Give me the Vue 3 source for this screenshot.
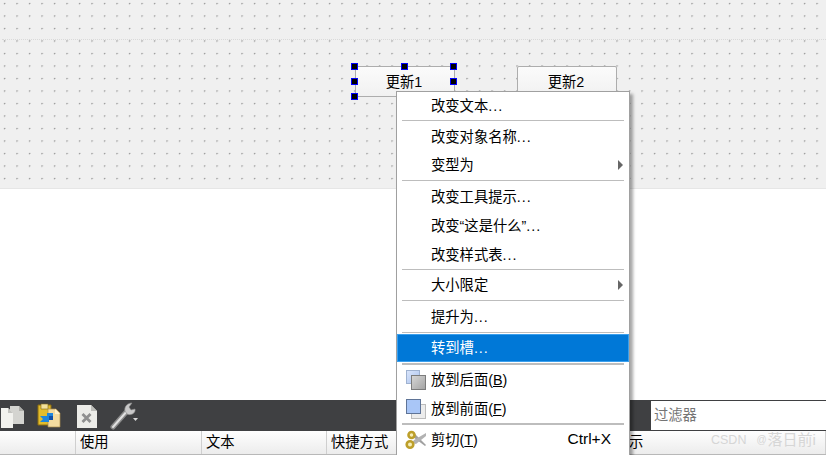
<script setup>
const columns = [
  { label: '', width: 76 },
  { label: '使用', width: 126 },
  { label: '文本', width: 125 },
  { label: '快捷方式', width: 125 },
  { label: '', width: 128 },
  { label: '示', width: 246, inset: 49 },
]
const handles = [
  { x: 0, y: 0 }, { x: 50, y: 0 }, { x: 99, y: 0 },
  { x: 0, y: 15 }, { x: 99, y: 15 }, { x: 0, y: 30 },
]
const menu = [
  { label: '改变文本', dots: true, h: 26 },
  { sep: 1, h: 3 },
  { label: '改变对象名称', dots: true, h: 29 },
  { label: '变型为', h: 28, arrow: true },
  { sep: 1, h: 3 },
  { label: '改变工具提示', dots: true, h: 29 },
  { label: '改变“这是什么”', dots: true, h: 30 },
  { label: '改变样式表', dots: true, h: 27 },
  { sep: 1, h: 3 },
  { label: '大小限定', h: 28, arrow: true },
  { sep: 1, h: 3 },
  { label: '提升为', dots: true, h: 29 },
  { sep: 1, h: 3 },
  { label: '转到槽', dots: true, h: 28, active: true },
  { sep: 2, h: 3 },
  { label: '放到后面', key: 'B', h: 30, icon: 'back' },
  { label: '放到前面', key: 'F', h: 27, icon: 'front' },
  { sep: 2, h: 3 },
  { label: '剪切', key: 'T', h: 30, icon: 'cut', shortcut: 'Ctrl+X' },
]
</script>

<template>
  <div class="app">
    <section class="canvas">
      <div class="guide"></div>
      <button class="widget w1"><span>更新1</span></button>
      <button class="widget w2"><span>更新2</span></button>
      <i
        v-for="(p, i) in handles"
        :key="i"
        class="handle"
        :style="{ left: 355 + p.x + 'px', top: 66 + p.y + 'px' }"
      ></i>
    </section>

    <div class="blank"></div>

    <section class="toolbar">
      <div class="tools">
        <svg class="ic pages" width="26" height="26" viewBox="0 0 26 26">
          <path d="M9 3h9l5 5v13H9z" fill="#d4d4d0" />
          <path d="M-3 5h10l5 5v15H-3z" fill="#f2f2ee" />
          <path d="M7 5l5 5H7z" fill="#c4c4c0" />
          <path d="M18 3l5 5h-5z" fill="#aeaeaa" />
        </svg>
        <svg class="ic save" width="24" height="26" viewBox="0 0 24 26">
          <path d="M1 2h13v20H1z" fill="#e3bd2c" stroke="#8c6c10" />
          <path d="M4 1h7v5H4z" fill="#f3e19a" stroke="#7d6420" stroke-width=".6" />
          <path d="M11 6h8l4 4v14H11z" fill="#f4dca0" stroke="#a98c4c" stroke-width=".7" />
          <path d="M18 6v5h5" fill="#fff3cc" />
          <path d="M16 10h-6v3H3l3 3-3 3h9v-2h4z" fill="#1e86dc" />
          <path d="M12 13h4v4h-4z" fill="#0f4fa8" />
        </svg>
        <svg class="ic doc" width="22" height="26" viewBox="0 0 22 26">
          <path d="M1 2h14l6 6v17H1z" fill="#ecece8" />
          <path d="M15 2l6 6h-6z" fill="#bdbdb9" />
          <path d="M6.500 11l8 8m0-8l-8 8" stroke="#8f8f8f" stroke-width="2.800" fill="none" />
        </svg>
        <svg class="ic wrench" width="30" height="28" viewBox="0 0 30 28">
          <path d="M3 25l15-17" stroke="#8a8a8a" stroke-width="5" stroke-linecap="round" fill="none" />
          <path d="M3 25l15-17" stroke="#e0e0e0" stroke-width="2" stroke-linecap="round" fill="none" />
          <path d="M15 9c-1-4 2-8 7-8l-3 4 2 3 4-1c1 4-4 7-8 5z" fill="#c9c9c9" stroke="#8a8a8a" stroke-width=".6" />
          <path d="M23 16h5l-2.500 3z" fill="#d8d8d8" />
        </svg>
      </div>
      <div class="filter">过滤器</div>
    </section>

    <section class="head">
      <div
        v-for="(c, i) in columns"
        :key="i"
        class="col"
        :style="{ width: c.width + 'px', paddingLeft: (c.inset || 4) + 'px' }"
      >{{ c.label }}</div>
    </section>

    <div class="mark"><span class="m1">CSDN</span><span class="m2">@</span><span class="m3">落日前i</span></div>

    <nav class="menu">
      <template v-for="(m, i) in menu" :key="i">
        <div v-if="m.sep" class="sep" :class="{ thick: m.sep === 2 }" :style="{ height: m.h + 'px' }"></div>
        <div v-else class="item" :class="{ active: m.active }" :style="{ height: m.h + 'px' }">
          <span class="icon">
            <svg v-if="m.icon === 'back'" width="22" height="22" viewBox="0 0 22 22">
              <defs>
                <linearGradient id="gb" x1="0" y1="0" x2="1" y2="1"><stop offset="0" stop-color="#dbe6fb" /><stop offset="1" stop-color="#a9c2ee" /></linearGradient>
                <linearGradient id="gg" x1="0" y1="0" x2="1" y2="1"><stop offset="0" stop-color="#d8d8d8" /><stop offset="1" stop-color="#a2a2a2" /></linearGradient>
              </defs>
              <rect x="1.500" y="1.500" width="13" height="13" fill="url(#gb)" stroke="#9fb2d0" />
              <rect x="6.500" y="6.500" width="14" height="14" fill="url(#gg)" stroke="#7c7c7c" />
            </svg>
            <svg v-else-if="m.icon === 'front'" width="22" height="22" viewBox="0 0 22 22">
              <rect x="6.500" y="6.500" width="14" height="14" fill="#ececec" stroke="#bcbcbc" />
              <rect x="1.500" y="1.500" width="14" height="14" fill="#a9c6f7" stroke="#5f7497" />
            </svg>
            <svg v-else-if="m.icon === 'cut'" width="22" height="20" viewBox="0 0 22 20">
              <path d="M8 2l13 13-1 1L8 7z" fill="#a0a0a0" />
              <path d="M21 3L9 10l-2 3 4 1 10-8z" fill="#b2b2b2" />
              <circle cx="5" cy="14.500" r="3.300" fill="#f6eeb8" stroke="#bd9f2a" stroke-width="2.600" />
              <circle cx="6.500" cy="5" r="3" fill="#f6eeb8" stroke="#bd9f2a" stroke-width="2.600" />
            </svg>
          </span>
          <span class="label">{{ m.label }}<span v-if="m.dots" class="dots">...</span><template v-if="m.key">(<u>{{ m.key }}</u>)</template></span>
          <span v-if="m.shortcut" class="shortcut">{{ m.shortcut }}</span>
          <span v-if="m.arrow" class="arrow"></span>
        </div>
      </template>
    </nav>
  </div>
</template>

<style scoped>
.app {
  position: relative;
  width: 826px;
  height: 455px;
  overflow: hidden;
  background: #fff;
  font-family: "Liberation Sans", "Noto Sans CJK SC", sans-serif;
  font-size: 14.300px;
  color: #000;
  display: flex;
  flex-direction: column;
}
.canvas {
  position: relative;
  height: 189px;
  flex: none;
  background-color: #f0f0f0;
  background-image: radial-gradient(circle at 4.500px 3.500px, #8f8f8f 0, #8f8f8f .6px, transparent 1px);
  background-size: 12.500px 12.500px;
  border-bottom: 1px solid #e6e6e6;
  box-sizing: border-box;
}
.guide {
  position: absolute;
  left: 2px;
  right: 0;
  top: 39px;
  border-top: 1px dotted #dadada;
}
.widget {
  position: absolute;
  top: 66px;
  width: 100px;
  height: 31px;
  padding: 0 2px 3px 0;
  border: 1px solid #adadad;
  border-radius: 2px;
  background: linear-gradient(#fbfbfb, #f1f1f1);
  font: inherit;
  color: #000;
}
.w1 { left: 355px; }
.w2 { left: 517px; }
.handle {
  position: absolute;
  margin: -3px 0 0 -4px;
  background: #000;
  border: 1px solid #0000ff;
  box-sizing: content-box;
  width: 5px;
  height: 5px;
}
.blank { flex: 1; }
.toolbar {
  flex: none;
  height: 31px;
  background: #3f4042;
  display: flex;
  justify-content: space-between;
  box-sizing: border-box;
  padding: 1px 0;
}
.tools {
  display: flex;
  align-items: center;
}
.ic { display: block; flex: none; }
.pages { margin-left: 1px; }
.save { margin-left: 10px; }
.doc { margin-left: 15px; }
.wrench { margin-left: 12px; }
.filter {
  width: 175px;
  background: #fff;
  color: #757575;
  line-height: 29px;
  padding-left: 3px;
  box-sizing: border-box;
}
.head {
  flex: none;
  height: 24px;
  display: flex;
  background: linear-gradient(#fefefe, #ececec);
  border-bottom: 1px solid #b8b8b8;
  box-sizing: border-box;
}
.col {
  flex: none;
  box-sizing: border-box;
  border-right: 1px solid #cfcfcf;
  line-height: 23px;
  white-space: nowrap;
}
.mark {
  position: absolute;
  left: 711px;
  top: 430px;
  line-height: 20px;
  color: #d6d6d6;
  white-space: nowrap;
  display: flex;
  align-items: center;
}
.m1 { font-size: 12.500px; }
.m2 { font-size: 10px; margin-left: 10px; margin-right: 1px; }
.m3 { font-size: 15px; }
.menu {
  position: absolute;
  left: 396px;
  top: 91px;
  width: 234px;
  height: 370px;
  box-sizing: border-box;
  background: #fff;
  border: 1px solid #a0a0a0;
  box-shadow: 3px 3px 3px rgba(0, 0, 0, .35);
  padding-top: 1px;
}
.item {
  display: flex;
  align-items: center;
  position: relative;
  box-sizing: border-box;
}
.item.active {
  background: #0078d7;
  color: #fff;
  box-shadow: inset 0 0 0 1px #3aa0ee;
}
.icon {
  width: 34px;
  flex: none;
  display: flex;
  align-items: center;
  padding-left: 8px;
  box-sizing: border-box;
}
.label {
  flex: 1;
  white-space: nowrap;
  margin-top: -3px;
}
.dots { letter-spacing: 1px; }
.label u { text-underline-offset: 1px; }
.shortcut {
  margin-right: 18px;
  margin-top: -3px;
  font-size: 15.500px;
}
.arrow {
  position: absolute;
  right: 6px;
  top: 50%;
  margin-top: -5px;
  border-left: 5px solid #666;
  border-top: 5px solid transparent;
  border-bottom: 5px solid transparent;
}
.sep {
  display: flex;
  align-items: center;
  padding: 0 5px;
  box-sizing: border-box;
}
.sep::before {
  content: "";
  flex: 1;
  height: 1px;
  background: #bdbdbd;
}
.sep.thick::before { height: 2px; }
</style>
